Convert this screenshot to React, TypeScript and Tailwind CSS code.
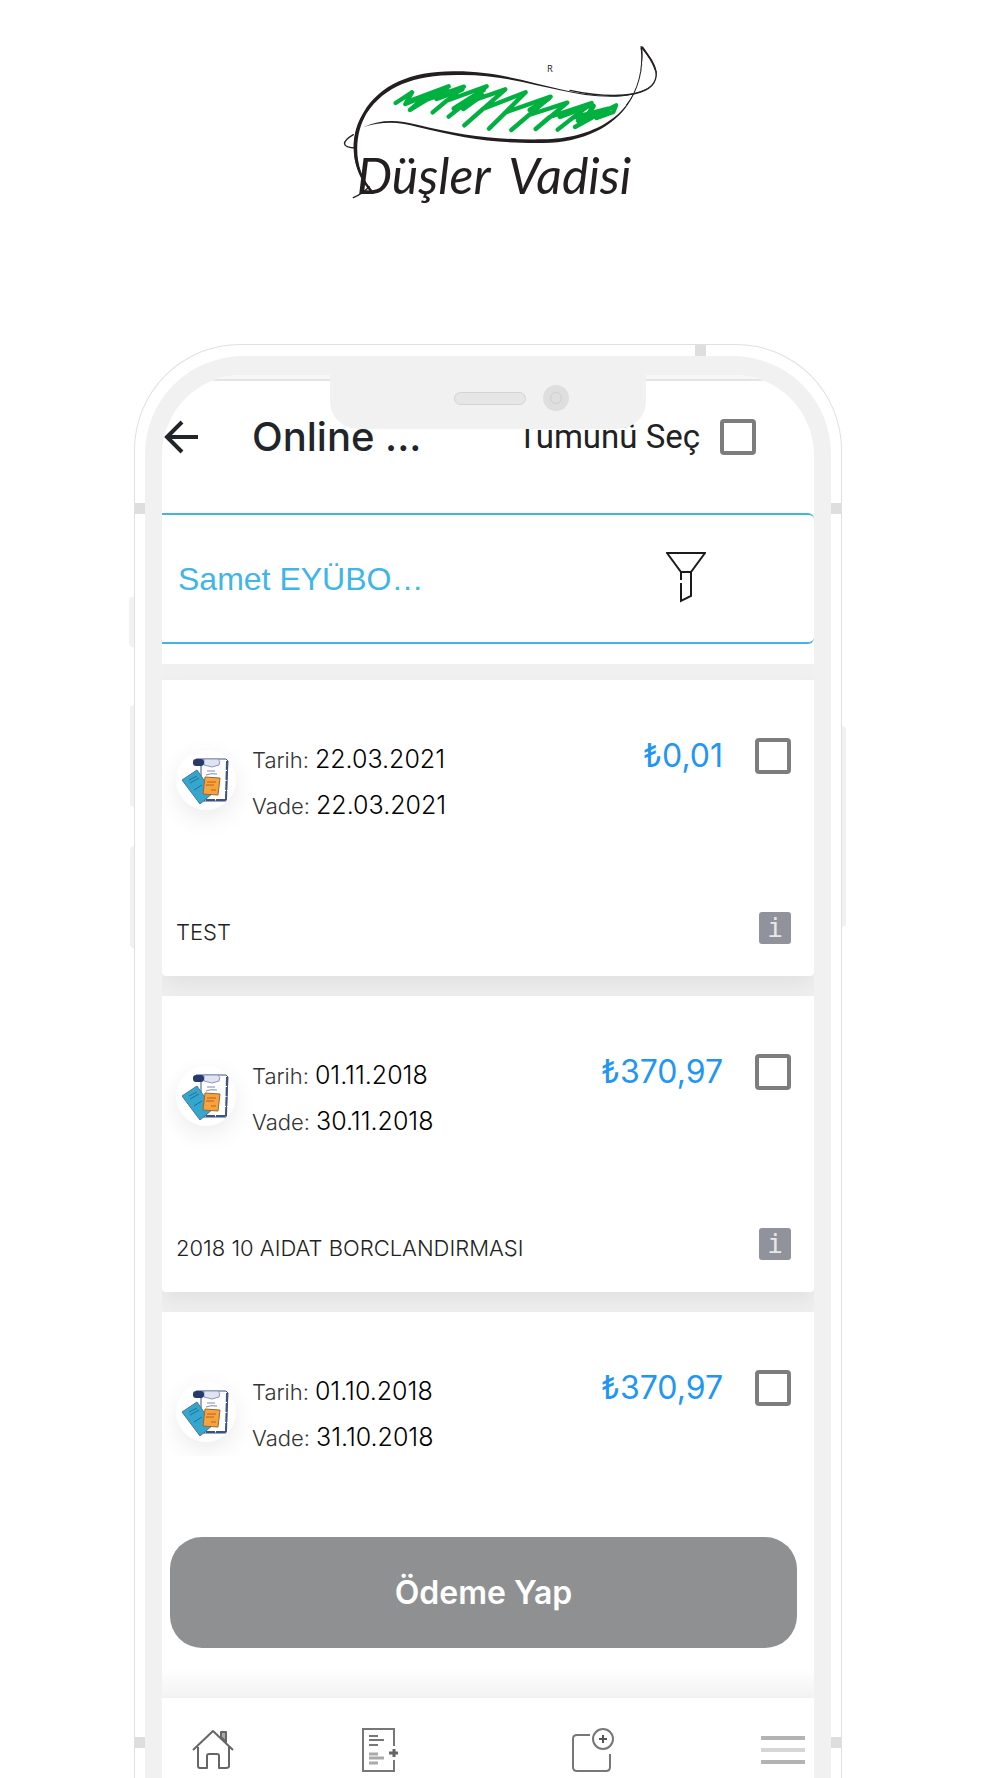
import { useState } from 'react';
import type { ReactNode } from 'react';

interface Debt {
    id: number;
    date: string;
    due: string;
    amount: string;
    note?: string;
}

const debts: Debt[] = [
    { id: 1, date: '22.03.2021', due: '22.03.2021', amount: '₺0,01', note: 'TEST' },
    { id: 2, date: '01.11.2018', due: '30.11.2018', amount: '₺370,97', note: '2018 10 AIDAT BORCLANDIRMASI' },
    { id: 3, date: '01.10.2018', due: '31.10.2018', amount: '₺370,97' },
];

const Logo = () => (
    <svg viewBox="0 0 1020 540" className="h-[180px] w-[340px]" role="img" aria-label="Düşler Vadisi">
        {/* Leaf outline */}
        <g fill="#231f20">
            <path d="M130 492 C60 420 55 320 100 248 C150 165 240 124 370 124 C560 122 690 200 850 197 C930 195 1000 165 973 118 C965 92 945 70 934 52 L930 50 C934 48 938 48 940 51 C960 80 975 98 980 125 C985 180 910 200 850 200 C700 203 560 130 380 135 C250 136 165 168 110 250 C72 312 66 420 131 488 Z" />
            <path d="M102 291 C150 268 200 268 262 284 C400 318 500 330 640 328 C780 325 915 265 936 110 C938 90 935 72 931 52 L937 54 C942 110 925 180 895 222 C850 290 760 338 640 339 C500 341 400 325 260 290 C200 274 155 275 102 291 Z" />
        </g>
        <g fill="none" stroke="#231f20" strokeLinecap="round">
            <path d="M720 181 C790 196 850 203 915 191 C965 180 982 158 978 125 C972 100 955 75 935 52" strokeWidth="4" />
            <path d="M890 224 C925 180 940 120 934 54" strokeWidth="3" />
            <path d="M128 488 C62 415 62 320 102 256" strokeWidth="7" />
            <path d="M70 314 C35 335 32 352 78 354" strokeWidth="4" />
            <path d="M70 503 Q95 492 118 470" strokeWidth="4" />
        </g>
        {/* Scribble */}
        <path
            d="M246 187 L197 219 M246 187 L226 222 L292 195 L240 240 L292 208 L356 169 L240 212 M292 208 L402 170 L308 247 L350 212 L470 169 L356 260 L407 219 L526 178 L403 286 L458 237 L587 187 L477 296 L527 247 L662 200 L544 300 L597 255 L712 218 L617 297 L659 261 L785 219 L683 299 L729 263 L835 236 L735 291 L780 266 L858 226 L850 246 L800 264"
            fill="none"
            stroke="#00b140"
            strokeWidth="13"
            strokeLinecap="round"
            strokeLinejoin="round"
        />
        <path
            d="M275 212 L350 178 M320 206 L396 178 M372 236 L460 180 M400 236 L456 196 M600 240 L655 206 M690 260 L775 228 M745 272 L820 244 M770 262 L790 228"
            fill="none"
            stroke="#00b140"
            strokeWidth="15"
            strokeLinecap="round"
        />
        <text x="651" y="125" fontSize="28" fill="#231f20" className="font-['Open_Sans',sans-serif]">R</text>
        <g fontSize="150" fill="#231f20" className="font-['Lato',sans-serif] italic">
            <text x="80" y="492">Düşler</text>
            <text x="535" y="492">Vadisi</text>
        </g>
    </svg>
);

const BackIcon = () => (
    <svg viewBox="0 0 36 36" className="size-9" fill="none" stroke="#212529" strokeWidth="4">
        <path d="M35 18 H5 M19 3 L4 18 L19 33" />
    </svg>
);

const FunnelIcon = () => (
    <svg viewBox="0 0 40 52" className="h-[52px] w-10" fill="none" stroke="#1b1b1b" strokeWidth="2">
        <path d="M1 2 H39 L25 21 H15 L1 2 Z" />
        <path d="M15 21 V29 M15 32 V50 L25 45 V21" />
    </svg>
);

const DocumentsIcon = () => (
    <svg viewBox="0 0 48 48" className="size-12">
        <path d="M14 3 H44 L46 5 L44 45 H19 V8 Z" fill="#fff" stroke="#3d5183" strokeWidth="1" />
        <path d="M45 5 L44 44 H22" fill="none" stroke="#3d5183" strokeWidth="2" strokeDasharray="9 1" />
        <path d="M22 3 H36 Q39 5 37 9 L30 11 L22 9 Z" fill="#dfe4f0" stroke="#8c98b8" strokeWidth="1" />
        <rect x="11" y="3" width="11" height="7" rx="3" fill="#263a6e" />
        <path d="M25 15 H33 M24 19 Q28 17 35 18" stroke="#7c89a8" strokeWidth="1" fill="none" />
        <path d="M0 24 L15 14 L31 37 L18 48 Z" fill="#35a7cf" stroke="#4b7590" strokeWidth="1" />
        <path d="M7 24 L15 20 M8 27 L17 22 M12 34 L20 29" stroke="#1f6f9a" strokeWidth="1" />
        <path d="M23 21 L38 22 L36 39 L21 38 Z" fill="#f9a13a" stroke="#95683a" strokeWidth="1" />
        <path d="M25 26 H34 M24 29 H32 M29 34 H34" stroke="#a86a20" strokeWidth="1" />
    </svg>
);

const HomeIcon = () => (
    <svg viewBox="0 0 42 44" className="h-11 w-[42px]" fill="none" stroke="#666" strokeWidth="2" strokeLinejoin="round">
        <path d="M1 22 L21 3 L41 22 M6 19 V38 Q6 40 8 40 H15 V28 Q15 26 17 26 H25 Q27 26 27 28 V40 H34 Q37 40 37 38 V19" />
        <path d="M29 9 V4 H34 V14 Z" fill="#aaa" />
    </svg>
);

const DocAddIcon = () => (
    <svg viewBox="0 0 37 44" className="h-11 w-[37px]" fill="none" stroke="#777">
        <path d="M32 18 V1 H1 V43 H32 V32" strokeWidth="2" />
        <path d="M7 8 H16 M7 12 H22 M7 17 H16" strokeWidth="2" />
        <path d="M7 26 H16 M7 30 H22 M7 35 H16" strokeWidth="3" stroke="#aaa" />
        <path d="M27 25 H36 M32 21 V29" strokeWidth="3" stroke="#666" />
    </svg>
);

const BoxAddIcon = () => (
    <svg viewBox="0 0 42 44" className="h-11 w-[42px]" fill="none" stroke="#777" strokeWidth="2">
        <path d="M18 7 H5 Q1 7 1 11 V39 Q1 43 5 43 H34 Q38 43 38 39 V26" />
        <circle cx="31" cy="11" r="10" />
        <path d="M27 11 H35 M31 7 V15" stroke="#555" />
    </svg>
);

const MenuIcon = () => (
    <svg viewBox="0 0 44 44" className="size-11" fill="none" strokeWidth="4">
        <path d="M0 10 H44 M0 34 H44" stroke="#b3b3b3" />
        <path d="M0 22 H44" stroke="#d6d6d6" />
    </svg>
);

const CheckBox = ({ id, checked, onChange, label }: { id: string; checked: boolean; onChange: () => void; label?: string }) => (
    <input
        id={id}
        type="checkbox"
        aria-label={label}
        checked={checked}
        onChange={onChange}
        className="size-9 shrink-0 appearance-none rounded-[4px] border-4 border-[#7d7d7d] bg-white checked:bg-[#2196f3]"
    />
);

const DebtCard = ({ debt, checked, onToggle }: { debt: Debt; checked: boolean; onToggle: () => void }) => (
    <article className="rounded-b bg-white pt-14 pr-[23px] pl-[14px] shadow-[0_10px_20px_rgba(0,0,0,0.06)]">
        <div className="flex items-start">
            <div className="mt-[14px] flex size-[60px] shrink-0 items-center justify-center rounded-full bg-white shadow-[0_8px_24px_rgba(0,0,0,0.08)]">
                <DocumentsIcon />
            </div>
            <dl className="ml-4 text-[25px] leading-[46px] font-light text-black">
                <div className="flex items-baseline gap-[6px]">
                    <dt className="text-[22px] leading-6 text-[#333]">Tarih:</dt>
                    <dd>{debt.date}</dd>
                </div>
                <div className="flex items-baseline gap-[6px]">
                    <dt className="text-[22px] leading-6 text-[#333]">Vade:</dt>
                    <dd>{debt.due}</dd>
                </div>
            </dl>
            <div className="mt-[2px] ml-auto flex items-center gap-8">
                <span className="text-[32px] leading-9 text-[#2196f3]">{debt.amount}</span>
                <CheckBox id={`debt-${debt.id}`} label={`${debt.date} ${debt.amount}`} checked={checked} onChange={onToggle} />
            </div>
        </div>
        {debt.note && (
            <div className="mt-[84px] flex items-end justify-between pb-8">
                <p className="text-[22px] leading-6 font-light text-[#222]">{debt.note}</p>
                <button
                    type="button"
                    aria-label="Detay"
                    className="size-8 rounded-[3px] bg-[#90939b] text-center font-['DejaVu_Sans_Mono',monospace] text-[26px] leading-8 text-[#e8e8ea]"
                >
                    i
                </button>
            </div>
        )}
    </article>
);

const NavButton = ({ label, children }: { label: string; children: ReactNode }) => (
    <button type="button" aria-label={label} className="justify-self-start">
        {children}
    </button>
);

// Phone body with side keys, antenna bands and the notch
const PhoneFrame = ({ children }: { children: ReactNode }) => (
    <div className="relative mr-[158px] ml-[134px] rounded-t-[106px] border-x border-t border-[#e0e0e0] px-[10px] pt-[11px]">
        <div className="absolute top-[252px] -left-[6px] h-[50px] w-[5px] rounded-l bg-[#f1f1f1]" />
        <div className="absolute top-[360px] -left-[5px] h-[102px] w-1 rounded-l bg-[#f1f1f1]" />
        <div className="absolute top-[501px] -left-[5px] h-[102px] w-1 rounded-l bg-[#f1f1f1]" />
        <div className="absolute top-[381px] -right-[5px] h-[201px] w-1 rounded-r bg-[#f1f1f1]" />
        <div className="absolute inset-x-0 top-[158px] h-[11px] bg-[#dedede]" />
        <div className="absolute inset-x-0 bottom-[30px] h-[11px] bg-[#dedede]" />
        <div className="absolute top-0 right-[135px] h-[11px] w-[11px] bg-[#dedede]" />
        <div className="relative rounded-t-[98px] bg-[#f1f1f1] px-[17px] pt-[19px]">
            <div className="overflow-hidden rounded-t-[80px] bg-white">{children}</div>
            <div className="absolute inset-x-[185px] top-0 flex h-[73px] items-center justify-end gap-[17px] rounded-b-[28px] bg-[#f1f1f1] pt-[11px] pr-[77px]">
                <div className="h-[13px] w-[72px] rounded-full border border-[#d4d4d4] bg-[#e6e6e6]" />
                <div className="flex size-[26px] items-center justify-center rounded-full bg-[#dedede]">
                    <div className="size-3 rounded-full border border-[#cfcfcf]" />
                </div>
            </div>
        </div>
    </div>
);

export default function App() {
    const [selected, setSelected] = useState<number[]>([]);
    const allSelected = selected.length === debts.length;

    const toggle = (id: number) =>
        setSelected(prev => (prev.includes(id) ? prev.filter(x => x !== id) : [...prev, id]));
    const toggleAll = () => setSelected(allSelected ? [] : debts.map(d => d.id));

    return (
        <div className="overflow-hidden bg-white font-['Inter',sans-serif]">
            <header className="flex justify-center pt-[30px] pb-[134px]">
                <Logo />
            </header>

            <PhoneFrame>
                <div className="h-[6px] border-b-2 border-[#e4e4e4] bg-[#f7f7f7]" />

                {/* Title bar */}
                <div className="flex h-[132px] items-center pr-[58px] pb-5 pl-[1px]">
                    <button type="button" aria-label="Geri">
                        <BackIcon />
                    </button>
                    <h1 className="ml-[53px] text-[40px] leading-10 font-medium text-[#212529]">Online ...</h1>
                    <label htmlFor="select-all" className="ml-auto font-['Roboto',sans-serif] text-[33px] leading-9 text-[#222]">
                        Tümünü Seç
                    </label>
                    <div className="ml-5 flex">
                        <CheckBox id="select-all" checked={allSelected} onChange={toggleAll} />
                    </div>
                </div>

                {/* Filter */}
                <div className="flex h-[131px] items-center justify-between rounded-r-md border-y-2 border-[#45b4e2] pr-[108px] pl-4">
                    <span className="font-['Liberation_Sans',sans-serif] text-[32px] leading-10 text-[#3fb5e8]">Samet EYÜBO…</span>
                    <button type="button" aria-label="Filtrele" className="pb-1">
                        <FunnelIcon />
                    </button>
                </div>
                <div className="h-5 bg-white" />

                <main className="flex flex-col gap-5 bg-[#f0f0f0] pt-4">
                    {debts.map(debt => (
                        <DebtCard
                            key={debt.id}
                            debt={debt}
                            checked={selected.includes(debt.id)}
                            onToggle={() => toggle(debt.id)}
                        />
                    ))}
                </main>

                <div className="relative -mt-1 bg-linear-to-b from-white from-88% to-[#f2f2f2] pt-[81px] pr-[17px] pb-[50px] pl-2">
                    <button type="button" className="h-[111px] w-full rounded-[32px] bg-[#8f9092] text-[32px] font-semibold text-white">
                        Ödeme Yap
                    </button>
                </div>
                <nav className="relative grid h-20 grid-cols-[170fr_210fr_189fr_44px] items-end bg-white pr-[9px] pb-[6px] pl-[30px]">
                    <NavButton label="Ana sayfa"><HomeIcon /></NavButton>
                    <NavButton label="Borçlar"><DocAddIcon /></NavButton>
                    <NavButton label="Rezervasyon"><BoxAddIcon /></NavButton>
                    <NavButton label="Menü"><MenuIcon /></NavButton>
                </nav>
            </PhoneFrame>
        </div>
    );
}
